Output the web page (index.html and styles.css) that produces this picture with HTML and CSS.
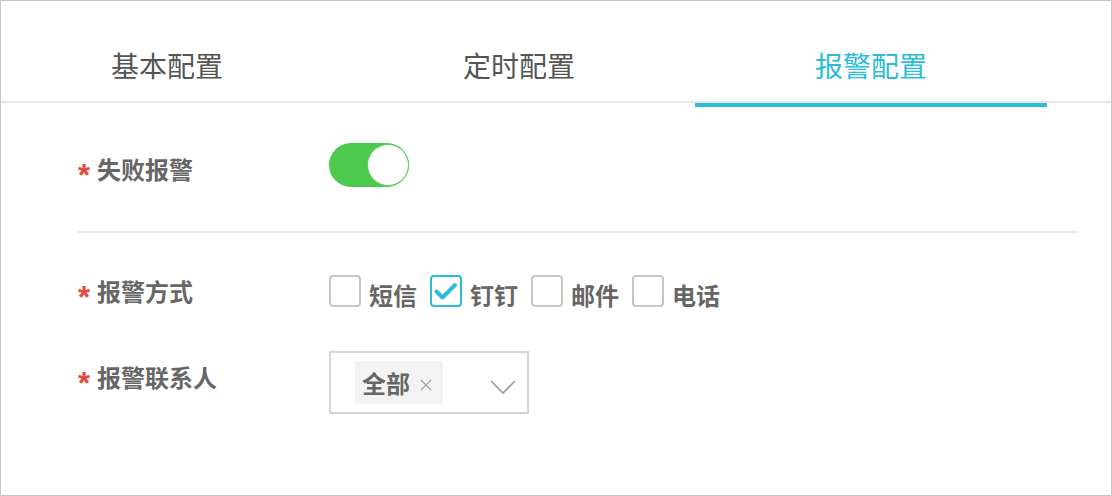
FILE: index.html
```html
<!DOCTYPE html>
<html lang="zh-CN">
<head>
<meta charset="utf-8">
<title>报警配置</title>
<link rel="stylesheet" href="styles.css">
</head>
<body>
<div class="page">
  <div class="tabs">
    <div class="tab">基本配置</div>
    <div class="tab">定时配置</div>
    <div class="tab tab-active">报警配置</div>
  </div>
  <div class="form">
    <div class="row row-switch">
      <div class="label label-offset"><span class="req">*</span>失败报警</div>
      <div class="switch"><div class="knob"></div></div>
    </div>
    <div class="divider"></div>
    <div class="row row-checks">
      <div class="label"><span class="req">*</span>报警方式</div>
      <div class="checks">
        <label class="check"><span class="box"></span><span class="check-text">短信</span></label>
        <label class="check"><span class="box box-on"><svg viewBox="0 0 28 28" width="28" height="28"><path d="M4.5 14.5 L10.5 20.5 L23 8" fill="none" stroke="#2bbcd9" stroke-width="4" stroke-linecap="round" stroke-linejoin="round"/></svg></span><span class="check-text">钉钉</span></label>
        <label class="check"><span class="box"></span><span class="check-text">邮件</span></label>
        <label class="check"><span class="box"></span><span class="check-text">电话</span></label>
      </div>
    </div>
    <div class="row row-select">
      <div class="label label-offset"><span class="req">*</span>报警联系人</div>
      <div class="select">
        <span class="tag"><span class="tag-text">全部</span><svg class="tag-x" viewBox="0 0 12 12" width="12" height="12"><path d="M1 1 L11 11 M11 1 L1 11" stroke="#a0a0a0" stroke-width="1.2" fill="none"/></svg></span>
        <svg class="chevron" viewBox="0 0 26 26" width="26" height="26"><path d="M1 9 L13 21 L25 9" fill="none" stroke="#9a9a9a" stroke-width="1.6"/></svg>
      </div>
    </div>
  </div>
</div>
</body>
</html>
```
FILE: styles.css
```css
* { box-sizing: border-box; }
html, body { margin: 0; padding: 0; background: #fff; }
body { font-family: "Noto Sans CJK SC", "Noto Sans", sans-serif; }

.page {
  width: 1112px;
  height: 496px;
  border: 1px solid #c6c6c6;
  overflow: hidden;
}

.tabs {
  display: flex;
  margin-left: -10px;
  border-bottom: 2px solid #e6e6e6;
}
.tab {
  position: relative;
  width: 352px;
  flex: none;
  text-align: center;
  font-size: 28px;
  line-height: 40px;
  padding: 44px 0 16px;
  color: #555;
}
.tab-active { color: #2bbcd9; }
.tab-active::after {
  content: "";
  position: absolute;
  left: 0;
  right: 0;
  bottom: -6px;
  height: 4px;
  background: #2bbcd9;
}

.form { padding: 40px 0 0 77px; }

.row { display: flex; align-items: flex-start; }
.label {
  width: 251px;
  flex: none;
  font-size: 24px;
  line-height: 32px;
  font-weight: bold;
  color: #666;
}
.label-offset { padding-top: 10px; }
.req {
  font-family: "Liberation Sans", Arial, sans-serif;
  font-size: 31px;
  font-weight: bold;
  color: #e4493c;
  line-height: 0;
  vertical-align: -7px;
  margin-right: 7px;
}

.switch {
  width: 80px;
  height: 44px;
  border-radius: 22px;
  background: #4dc94d;
  display: flex;
  justify-content: flex-end;
  align-items: center;
}
.knob {
  width: 42px;
  height: 42px;
  border-radius: 50%;
  background: #fff;
  border: 1.5px solid #5ccf5c;
}

.divider {
  margin: 44px 0 42px 0;
  width: 1000px;
  height: 2px;
  background: #ebebeb;
}

.checks { display: flex; gap: 13px; }
.check { display: flex; align-items: flex-start; gap: 8px; }
.box {
  width: 32px;
  height: 32px;
  border: 2px solid #c6c6c6;
  border-radius: 4px;
  display: flex;
  align-items: center;
  justify-content: center;
}
.box-on { border-color: #2bbcd9; }
.check-text {
  font-size: 24px;
  line-height: 32px;
  padding-top: 4px;
  font-weight: bold;
  color: #666;
}

.row-select { margin-top: 40px; }
.select {
  width: 200px;
  height: 63px;
  border: 2px solid #d4d4d4;
  display: flex;
  align-items: center;
  padding: 0 11px 0 24px;
}
.tag {
  height: 43px;
  background: #f3f3f3;
  display: flex;
  align-items: center;
  padding: 0 11px 0 7px;
  gap: 10px;
}
.tag-text {
  font-size: 24px;
  line-height: 43px;
  font-weight: bold;
  color: #666;
}
.tag-x { margin-top: 4px; }
.chevron { margin-left: auto; margin-top: 4px; }
```
